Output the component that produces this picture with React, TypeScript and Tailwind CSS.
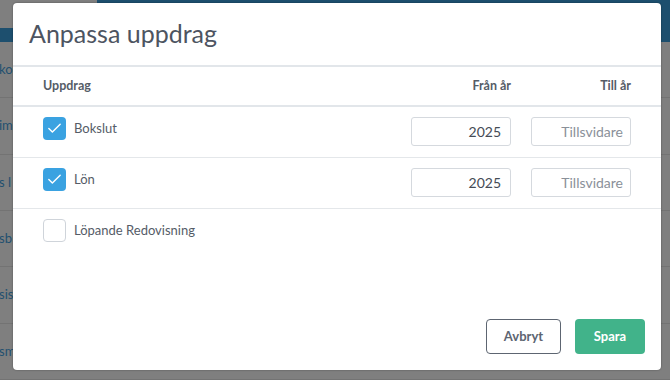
import { Check } from "lucide-react";

const rows = [
  { name: "Bokslut", checked: true, from: "2025" },
  { name: "Lön", checked: true, from: "2025" },
  { name: "Löpande Redovisning", checked: false, from: null },
];

const bgRows = ["kol", "im", "s l", "sb", "sis", "sm"];

function Background() {
  return (
    <div className="flex h-[380px] w-[670px] flex-col bg-[#7f7f7f]">
      <div className="flex h-[44px]">
        <div className="flex w-[97px] flex-col">
          <div className="h-[28px] bg-[#7f7f7f]" />
          <div className="flex-1 bg-[#1d4f6e]" />
        </div>
        <div className="flex-1 bg-[#1d4f6e]" />
      </div>
      {bgRows.map((t, i) => (
        <div
          key={t}
          className={`flex h-[59px] items-center border-b border-[#737373] text-[13px] text-[#22506f] ${
            i === 0 ? "h-[51px]" : ""
          }`}
        >
          <span className="-ml-[1px]">{t}</span>
        </div>
      ))}
    </div>
  );
}

export default function App() {
  return (
    <div
      className="relative h-[380px] w-[670px] overflow-hidden"
      style={{ fontFamily: "Lato, 'Open Sans', sans-serif" }}
    >
      <Background />

      <div className="absolute left-[13px] top-[3px] flex h-[367px] w-[648px] flex-col rounded-[4px] bg-white shadow-[0_0_2px_rgba(0,0,0,0.4)]">
        <div className="flex h-[64px] items-center border-b-2 border-[#e2e6ea] px-[16px]">
          <h1 className="text-[25px] font-normal text-[#4d5461]">Anpassa uppdrag</h1>
        </div>

        <div className="flex h-[40px] items-center border-b-2 border-[#e2e6ea] px-[30px] text-[12.5px] font-bold text-[#555c67]">
          <div className="flex-1">Uppdrag</div>
          <div className="w-[100px] text-right">Från år</div>
          <div className="ml-[20px] w-[100px] text-right">Till år</div>
        </div>

        {rows.map((r, i) => (
          <div
            key={r.name}
            className={`flex h-[51px] items-start px-[30px] pt-[10px] ${
              i < rows.length - 1 ? "border-b border-[#e4e7ea]" : ""
            }`}
          >
            <div className="flex flex-1 items-center gap-[8px]">
              {r.checked ? (
                <div className="flex h-[23px] w-[23px] items-center justify-center rounded-[4px] bg-[#3aa2e1]">
                  <Check size={17} strokeWidth={2} className="text-white" />
                </div>
              ) : (
                <div className="h-[23px] w-[23px] rounded-[4px] border border-[#cfd4da] bg-white" />
              )}
              <span className="text-[13px] text-[#555c67]">{r.name}</span>
            </div>
            {r.from && (
              <>
                <div className="flex h-[29px] w-[100px] items-center justify-end rounded-[3px] border border-[#d5d9de] px-[9px] text-[14px] text-[#454b55]">
                  {r.from}
                </div>
                <div className="ml-[20px] flex h-[29px] w-[100px] items-center justify-end rounded-[3px] border border-[#d5d9de] px-[7px] text-[14px] text-[#8a9099]">
                  Tillsvidare
                </div>
              </>
            )}
          </div>
        ))}

        <div className="flex-1" />

        <div className="flex justify-end gap-[14px] px-[16px] pb-[16px]">
          <button className="h-[35px] w-[75px] rounded-[4px] border border-[#5d6571] bg-white text-[13px] font-bold text-[#5d6571]">
            Avbryt
          </button>
          <button className="h-[35px] w-[70px] rounded-[4px] bg-[#41b38a] text-[13px] font-bold text-white">
            Spara
          </button>
        </div>
      </div>
    </div>
  );
}
